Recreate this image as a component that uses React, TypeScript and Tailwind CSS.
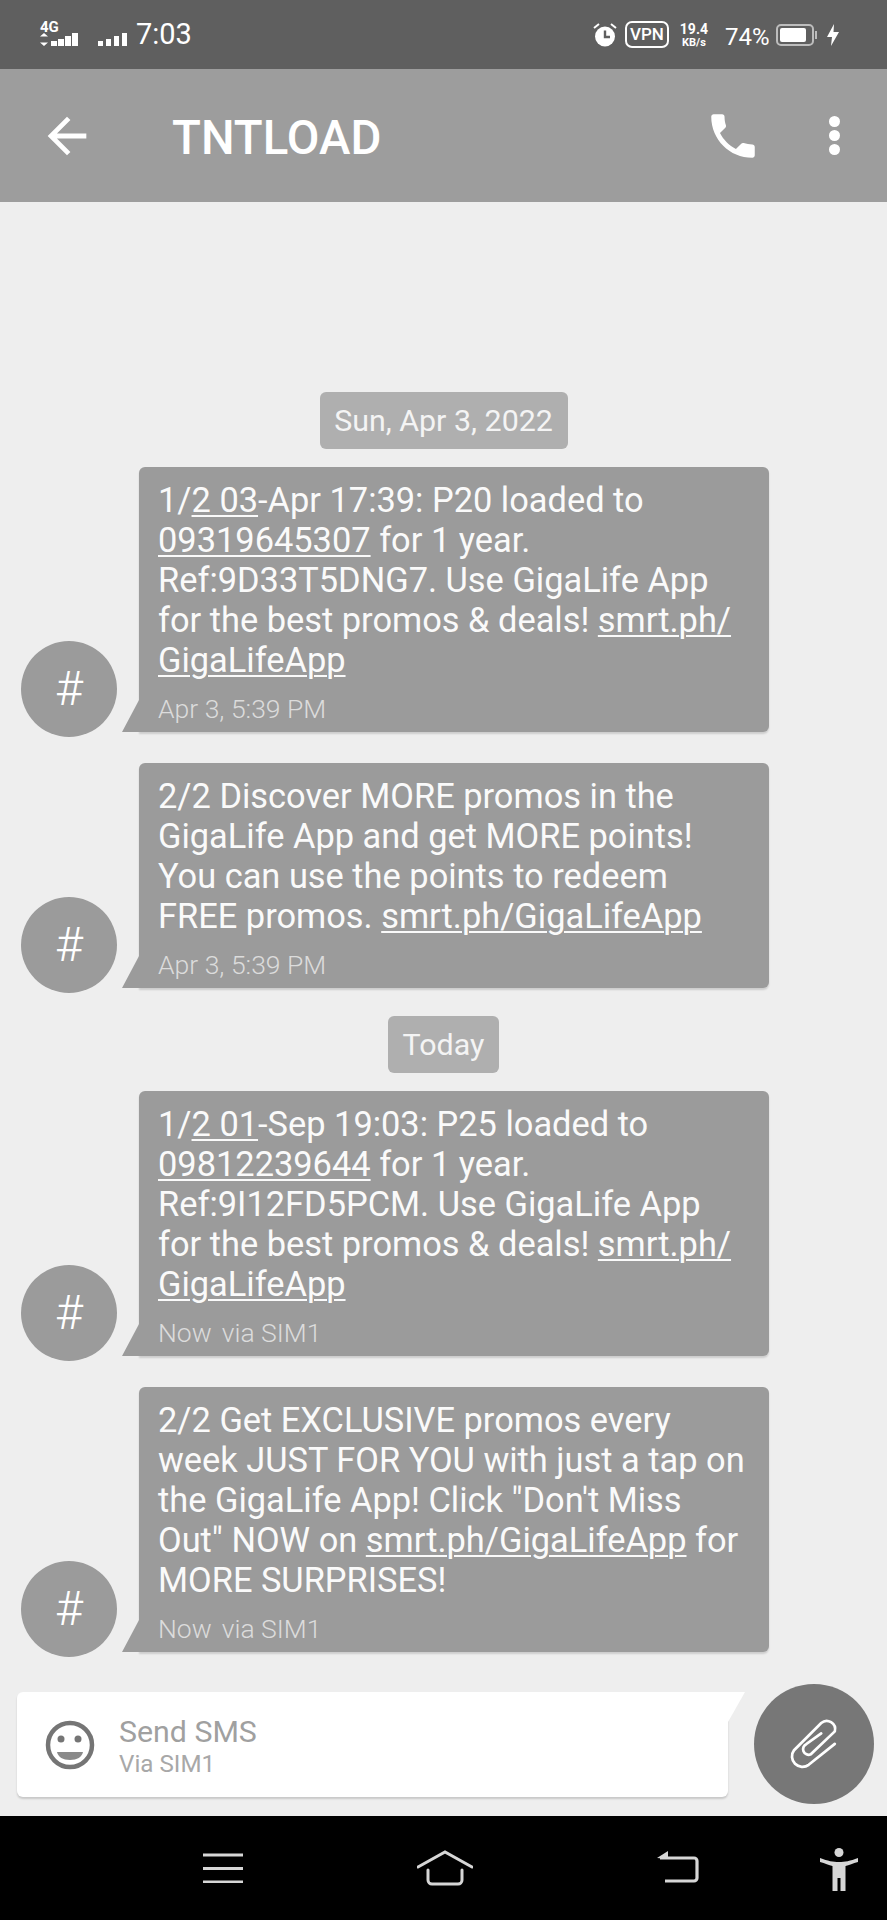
import React from 'react';

const Link = ({ children }: { children: React.ReactNode }) => (
  <span className="underline decoration-2 underline-offset-[3px]">{children}</span>
);

const DatePill = ({ label, width }: { label: string; width: string }) => (
  <div className={`mx-auto flex h-[57px] items-center justify-center rounded-[6px] bg-[#afafaf] pt-[1px] text-[30.4px] text-[#f4f4f4] ${width}`}>
    {label}
  </div>
);

// one incoming sms, avatar on the left and a little tail under the bubble
const Message = ({ meta, className, children }: { meta: React.ReactNode; className?: string; children: React.ReactNode }) => (
  <div className={`flex items-end pl-[21px] ${className ?? ''}`}>
    <div className="mb-[-5px] flex h-[96px] w-[96px] shrink-0 items-center justify-center rounded-full bg-[#9b9b9b] text-[48px] font-light text-white">
      #
    </div>
    <div className="relative ml-[22px] w-[630px] rounded-[6px] rounded-bl-none bg-[#9b9b9b] pl-[19px] pt-[13px] pb-[3px] shadow-[0_2px_2px_rgba(0,0,0,0.14)]">
      <svg className="absolute bottom-0 left-[-17px]" width="17" height="32" viewBox="0 0 17 32">
        <path d="M17 0V32H0Z" fill="#9b9b9b" />
      </svg>
      <div className="whitespace-nowrap text-[34.4px] leading-[40px] text-[#fafafa]">{children}</div>
      <div className="mt-[9px] text-[26.5px] font-light leading-[40px] text-[#dcdcdc]">{meta}</div>
    </div>
  </div>
);

const NowMeta = () => (
  <>
    Now<span className="ml-[10px]">via SIM1</span>
  </>
);

const StatusBar = () => (
  <div className="flex h-[69px] shrink-0 items-center bg-[#5f5f5f] text-white">
    <div className="ml-[40px] flex flex-col">
      <span className="mt-[-1px] text-[15px] font-bold leading-[11px]">4G</span>
      <svg width="38" height="13" viewBox="0 0 38 13" fill="#fff">
        <path d="M4 0l4 3.500H0zM4 13l4-3.500H0zM11 8h6v5h-6zM18 6h6v7h-6zM25 3h6v10h-6zM32 0h6v13h-6z" />
      </svg>
    </div>
    <svg className="ml-[20px] mt-[10px]" width="29" height="13" viewBox="0 0 29 13" fill="#fff">
      <path d="M0 8h5v5H0zM8 6h5v7H8zM16 3h5v10h-5zM24 0h5v13h-5z" />
    </svg>
    <span className="ml-[9px] text-[29px] leading-none">7:03</span>
    <svg className="ml-[401px]" width="24" height="24" viewBox="0 0 24 24" fill="#fff">
      <circle cx="12" cy="13.500" r="10" />
      <path d="M1 5l5-4M23 5l-5-4" stroke="#fff" strokeWidth="2" />
      <path d="M12 7.500v6.500h5" stroke="#5f5f5f" strokeWidth="2.400" fill="none" />
    </svg>
    <div className="ml-[8px] flex h-[27px] w-[44px] items-center justify-center rounded-[7px] border-2 border-white text-[17px] font-medium leading-none">
      VPN
    </div>
    <div className="ml-[10px] flex w-[30px] flex-col items-center font-bold leading-none">
      <span className="text-[14px]">19.4</span>
      <span className="mt-[1px] text-[11px]">KB/s</span>
    </div>
    <span className="ml-[16px] mt-[4px] text-[24px] leading-none">74%</span>
    <svg className="ml-[7px]" width="42" height="22" viewBox="0 0 42 22">
      <rect x="1" y="1" width="36" height="20" rx="4" fill="none" stroke="#bdbdbd" strokeWidth="2" />
      <rect x="4" y="4" width="26" height="14" rx="2" fill="#fff" />
      <path d="M40 7v8" stroke="#bdbdbd" strokeWidth="2" />
    </svg>
    <svg className="ml-[9px]" width="12" height="22" viewBox="0 0 12 22" fill="#fff">
      <path d="M7 0L0 13h5l-1 9 8-14H6.500z" />
    </svg>
  </div>
);

const AppBar = () => (
  <div className="flex h-[133px] shrink-0 items-center bg-[#9d9d9d] text-white">
    <svg className="ml-[38px]" width="58" height="58" viewBox="0 0 24 24" fill="#fff">
      <path d="M20 11H7.830l5.590-5.590L12 4l-8 8 8 8 1.410-1.410L7.830 13H20v-2z" />
    </svg>
    <div className="ml-[76px] mt-[6px] text-[47.4px] font-medium leading-none">TNTLOAD</div>
    <svg className="ml-auto" width="58" height="58" viewBox="0 0 24 24" fill="#fff">
      <path d="M6.620 10.790c1.440 2.830 3.760 5.140 6.590 6.590l2.200-2.200c.27-.27.67-.36 1.020-.24 1.120.37 2.330.57 3.570.57.55 0 1 .45 1 1V20c0 .55-.45 1-1 1-9.390 0-17-7.610-17-17 0-.55.45-1 1-1h3.500c.55 0 1 .45 1 1 0 1.250.2 2.450.57 3.570.11.35.03.74-.25 1.020l-2.200 2.200z" />
    </svg>
    <div className="ml-[67px] mr-[47px] flex flex-col gap-[3px]">
      <div className="h-[11px] w-[11px] rounded-full bg-white" />
      <div className="h-[11px] w-[11px] rounded-full bg-white" />
      <div className="h-[11px] w-[11px] rounded-full bg-white" />
    </div>
  </div>
);

const InputRow = () => (
  <div className="flex items-start pl-[17px]">
    <div className="relative mt-[8px] flex h-[105px] w-[711px] items-center rounded-[6px] rounded-tr-none bg-white pl-[28px] shadow-[0_2px_2px_rgba(0,0,0,0.16)]">
      <svg className="absolute right-[-17px] top-0" width="17" height="30" viewBox="0 0 17 30">
        <path d="M0 0H17L0 30Z" fill="#fff" />
      </svg>
      <svg width="50" height="50" viewBox="0 0 50 50">
        <circle cx="25" cy="25" r="22" fill="none" stroke="#757575" strokeWidth="4.500" />
        <circle cx="16" cy="19" r="3.500" fill="#757575" />
        <circle cx="33" cy="19" r="3.500" fill="#757575" />
        <path d="M12 32h26c-1 5-6 8-13 8s-12-3-13-8z" fill="#8a8a8a" />
      </svg>
      <div className="ml-[24px] flex flex-col pt-[5px]">
        <span className="text-[30.3px] leading-[34px] text-[#a0a0a0]">Send SMS</span>
        <span className="text-[24.2px] leading-[30px] text-[#a8a8a8]">Via SIM1</span>
      </div>
    </div>
    <div className="ml-[26px] flex h-[120px] w-[120px] items-center justify-center rounded-full bg-[#777777]">
      <svg className="ml-[3px] mt-[4px]" width="94" height="94" viewBox="0 0 90 90" fill="none" stroke="#fff" strokeWidth="2.600" strokeLinecap="round">
        <path d="M63 43L38 63A10 10 0 0 1 24 49L50 23A8 8 0 0 1 63 31L40 53A4.500 4.500 0 0 1 36 43L50 33" />
      </svg>
    </div>
  </div>
);

const NavBar = () => (
  <div className="flex h-[104px] shrink-0 items-center bg-black pl-[203px]">
    <svg width="40" height="30" viewBox="0 0 40 30" stroke="#d6d6d6" strokeWidth="3">
      <path d="M0 2h40M0 15.500h40M0 29h40" />
    </svg>
    <svg className="ml-[174px]" width="56" height="36" viewBox="0 0 56 36" fill="none" stroke="#d6d6d6" strokeWidth="3" strokeLinecap="round">
      <path d="M1 17L28 2l27 15" />
      <path d="M11 20v10a4 4 0 0 0 4 4h26a4 4 0 0 0 4-4V20" />
    </svg>
    <svg className="ml-[184px] mt-[-3px]" width="42" height="34" viewBox="0 0 42 34" fill="none" stroke="#d6d6d6" strokeWidth="3.200">
      <path d="M3 8h34a3 3 0 0 1 3 3v17a3 3 0 0 1-3 3H8" />
      <path d="M0 8l11-7v8z" fill="#d6d6d6" stroke="none" />
    </svg>
    <svg className="ml-[121px] mt-[2px]" width="38" height="43" viewBox="0 0 38 43" fill="#d6d6d6">
      <circle cx="19" cy="4.500" r="4.500" />
      <path d="M0 10V14C5 15.500 9 17 12.500 18V43H17.500V30H20.500V43H25.500V18C29 17 33 15.500 38 14V10C30 13 25 14 19 14C13 14 8 13 0 10Z" />
    </svg>
  </div>
);

export default function App() {
  return (
    <div className="flex h-[1920px] w-[887px] flex-col overflow-hidden bg-[#eeeeee] font-['Roboto',sans-serif]">
      <StatusBar />
      <AppBar />
      <div className="min-h-0 flex-1 pt-[190px]">
        <DatePill label="Sun, Apr 3, 2022" width="w-[248px]" />
        <Message className="mt-[18px]" meta="Apr 3, 5:39 PM">
          1/<Link>2 03</Link>-Apr 17:39: P20 loaded to<br />
          <Link>09319645307</Link> for 1 year.<br />
          Ref:9D33T5DNG7. Use GigaLife App<br />
          for the best promos &amp; deals! <Link>smrt.ph/</Link><br />
          <Link>GigaLifeApp</Link>
        </Message>
        <Message className="mt-[31px]" meta="Apr 3, 5:39 PM">
          2/2 Discover MORE promos in the<br />
          GigaLife App and get MORE points!<br />
          You can use the points to redeem<br />
          FREE promos. <Link>smrt.ph/GigaLifeApp</Link>
        </Message>
        <div className="mt-[28px]">
          <DatePill label="Today" width="w-[111px]" />
        </div>
        <Message className="mt-[18px]" meta={<NowMeta />}>
          1/<Link>2 01</Link>-Sep 19:03: P25 loaded to<br />
          <Link>09812239644</Link> for 1 year.<br />
          Ref:9I12FD5PCM. Use GigaLife App<br />
          for the best promos &amp; deals! <Link>smrt.ph/</Link><br />
          <Link>GigaLifeApp</Link>
        </Message>
        <Message className="mt-[31px]" meta={<NowMeta />}>
          2/2 Get EXCLUSIVE promos every<br />
          week JUST FOR YOU with just a tap on<br />
          the GigaLife App! Click "Don't Miss<br />
          Out" NOW on <Link>smrt.ph/GigaLifeApp</Link> for<br />
          MORE SURPRISES!
        </Message>
        <div className="mt-[32px]">
          <InputRow />
        </div>
      </div>
      <NavBar />
    </div>
  );
}
